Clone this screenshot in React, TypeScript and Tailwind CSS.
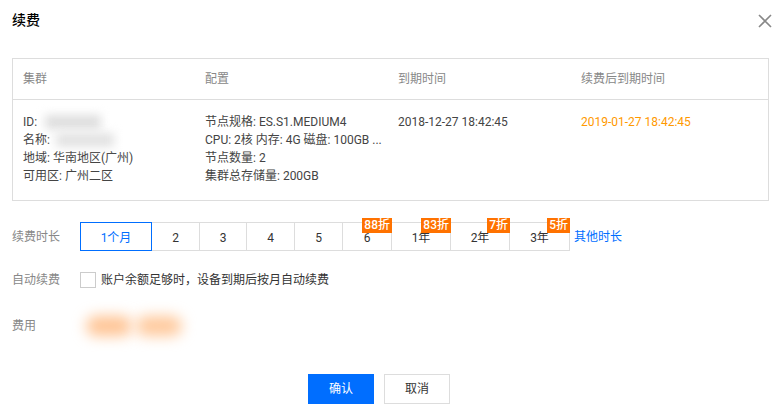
const durations = [
  { label: "1个月", w: "w-[72px]" },
  { label: "2", w: "w-[48px]" },
  { label: "3", w: "w-[47px]" },
  { label: "4", w: "w-[48px]" },
  { label: "5", w: "w-[48px]" },
  { label: "6", w: "w-[49px]", badge: "88折" },
  { label: "1年", w: "w-[59px]", badge: "83折" },
  { label: "2年", w: "w-[59px]", badge: "7折" },
  { label: "3年", w: "w-[60px]", badge: "5折" },
];

const App = () => {
  return (
    <div
      className="w-[781px] h-[414px] bg-white text-[12px] text-[#444] overflow-hidden"
      style={{ fontFamily: 'Roboto, "Noto Sans CJK SC", sans-serif' }}
    >
      {/* header */}
      <div className="flex items-center justify-between pl-3 pr-[9px] h-[40px]">
        <h2 className="text-[14px] font-medium text-black">续费</h2>
        <svg width="14" height="14" viewBox="0 0 14 14" className="mt-[1px]">
          <path d="M1 1L13 13M13 1L1 13" stroke="#888" strokeWidth="1.6" />
        </svg>
      </div>

      {/* table */}
      <div className="mx-3 mt-[18px] border border-[#ddd] h-[143px]">
        <div className="grid grid-cols-[182px_192px_184px_1fr] h-[41px] border-b border-[#ddd] items-center text-[#888]">
          <div className="pl-[10px]">集群</div>
          <div className="pl-[10px]">配置</div>
          <div className="pl-[11px]">到期时间</div>
          <div className="pl-[10px]">续费后到期时间</div>
        </div>
        <div className="grid grid-cols-[182px_192px_184px_1fr] pt-[13px] leading-[18px]">
          <div className="pl-[10px]">
            <div className="flex items-center">
              ID:
              <span className="ml-[8px] w-[56px] h-[14px] bg-[#dedede] blur-[5px]" />
            </div>
            <div className="flex items-center">
              名称:
              <span className="ml-[6px] w-[58px] h-[14px] bg-[#e2e2e2] blur-[5px]" />
            </div>
            <div>地域: 华南地区(广州)</div>
            <div>可用区: 广州二区</div>
          </div>
          <div className="pl-[10px]">
            <div>节点规格: ES.S1.MEDIUM4</div>
            <div>CPU: 2核 内存: 4G 磁盘: 100GB ...</div>
            <div>节点数量: 2</div>
            <div>集群总存储量: 200GB</div>
          </div>
          <div className="pl-[11px]">2018-12-27 18:42:45</div>
          <div className="pl-[10px] text-[#ff9900]">2019-01-27 18:42:45</div>
        </div>
      </div>

      {/* duration */}
      <div className="flex items-center px-3 mt-[21px]">
        <div className="w-[68px] text-[#888]">续费时长</div>
        <div className="flex">
          {durations.map((d, i) => (
            <div
              key={d.label}
              className={
                "relative h-[29px] flex items-center justify-center " +
                d.w +
                (i === 0
                  ? " border border-[#006eff] text-[#006eff] z-10"
                  : " border-y border-r border-[#ddd] text-[#333]")
              }
            >
              <span className="mt-[2px]">{d.label}</span>
              {d.badge && (
                <span className="absolute right-[-1px] top-[-5px] h-[15px] px-[2px] bg-[#ff7200] text-white text-[12px] font-medium leading-[15px]">
                  {d.badge}
                </span>
              )}
            </div>
          ))}
        </div>
        <a className="ml-[4px] text-[#006eff]">其他时长</a>
      </div>

      {/* auto renew */}
      <div className="flex items-center px-3 mt-[20px]">
        <div className="w-[68px] text-[#888]">自动续费</div>
        <span className="w-[16px] h-[16px] border border-[#ccc] bg-white" />
        <span className="ml-[5px] text-[#333]">账户余额足够时，设备到期后按月自动续费</span>
      </div>

      {/* fee */}
      <div className="flex items-center px-3 mt-[20px] h-[34px]">
        <div className="w-[68px] text-[#888]">费用</div>
        <div className="flex gap-[4px] ml-[6px]">
          <span className="w-[46px] h-[20px] rounded-full bg-[#ffc494] blur-[7px]" />
          <span className="w-[46px] h-[20px] rounded-full bg-[#ffc99c] blur-[7px]" />
        </div>
      </div>

      {/* footer */}
      <div className="flex justify-center gap-[10px] mt-[31px] pr-[23px]">
        <button className="w-[66px] h-[30px] bg-[#006eff] text-white text-[12px]">确认</button>
        <button className="w-[66px] h-[30px] border border-[#ddd] bg-white text-[#333] text-[12px]">取消</button>
      </div>
    </div>
  );
};

export default App;
